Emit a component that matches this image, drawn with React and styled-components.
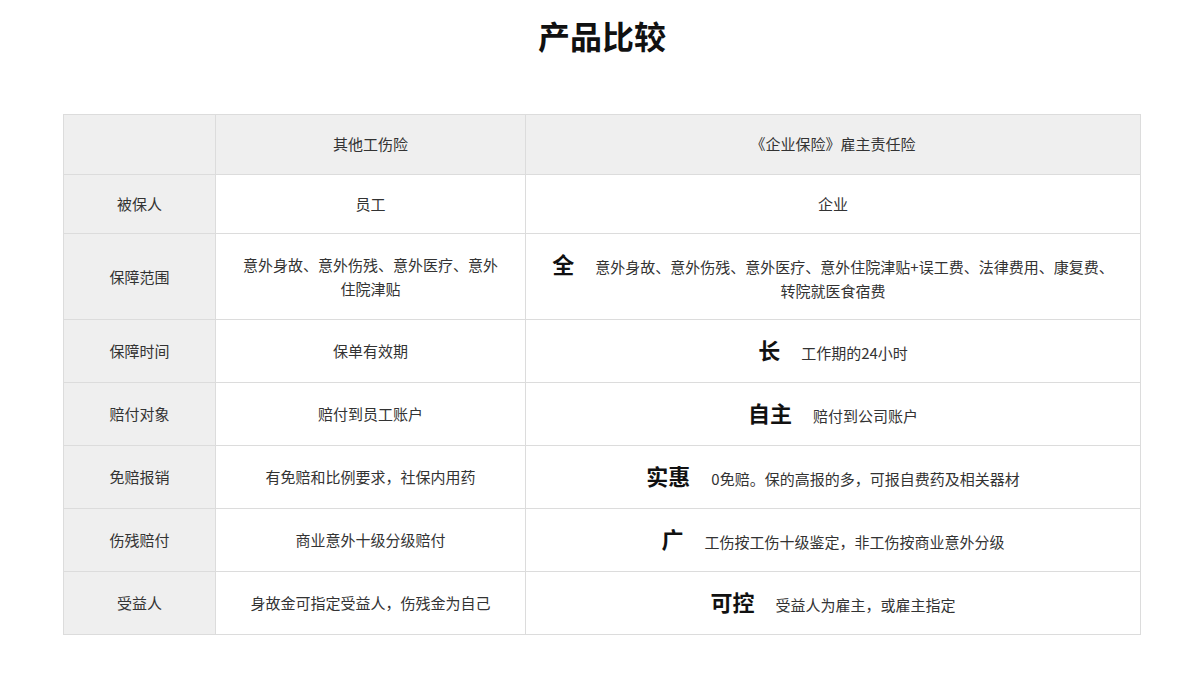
import React from 'react';
import styled, { createGlobalStyle } from 'styled-components';

const GlobalStyle = createGlobalStyle`
  body {
    margin: 0;
    background: #fff;
    font-family: 'Microsoft YaHei', 'Noto Sans CJK SC', 'Noto Sans', sans-serif;
    color: #333;
    text-spacing-trim: space-all;
    font-feature-settings: "halt" 0, "chws" 0;
  }
`;

const Page = styled.div`
  padding: 15px 59px 40px 63px;
`;

const Title = styled.h2`
  margin: 0;
  text-align: center;
  font-size: 32px;
  line-height: 40px;
  font-weight: 700;
  color: #111;
`;

const Table = styled.table`
  margin-top: 59px;
  width: 100%;
  border-collapse: collapse;
  table-layout: fixed;
  font-size: 15px;
`;

const Cell = styled.td`
  border: 1px solid #dcdcdc;
  padding: ${(p) => (p.$tall ? '17px 25px 16px' : '17px 25px')};
  line-height: 24px;
  text-align: center;
  vertical-align: middle;
  font-weight: 400;
  background: ${(p) => (p.$shade ? '#efefef' : '#fff')};
  color: #333;
`;

const HeadCell = styled(Cell).attrs({ as: 'th' })`
  padding: 17px 25px 18px;
`;

const Key = styled.strong`
  font-size: 22px;
  line-height: 25px;
  font-weight: 700;
  color: #111;
  margin-right: 21px;
`;

const rows = [
  { label: '被保人', other: '员工', key: '', ours: '企业' },
  {
    label: '保障范围',
    other: '意外身故、意外伤残、意外医疗、意外住院津贴',
    key: '全',
    ours: '意外身故、意外伤残、意外医疗、意外住院津贴+误工费、法律费用、康复费、转院就医食宿费',
    tall: true,
  },
  { label: '保障时间', other: '保单有效期', key: '长', ours: '工作期的24小时' },
  { label: '赔付对象', other: '赔付到员工账户', key: '自主', ours: '赔付到公司账户' },
  { label: '免赔报销', other: '有免赔和比例要求，社保内用药', key: '实惠', ours: '0免赔。保的高报的多，可报自费药及相关器材' },
  { label: '伤残赔付', other: '商业意外十级分级赔付', key: '广', ours: '工伤按工伤十级鉴定，非工伤按商业意外分级' },
  { label: '受益人', other: '身故金可指定受益人，伤残金为自己', key: '可控', ours: '受益人为雇主，或雇主指定' },
];

export default function App() {
  return (
    <Page>
      <GlobalStyle />
      <Title>产品比较</Title>
      <Table>
        <colgroup>
          <col style={{ width: 152 }} />
          <col style={{ width: 310 }} />
          <col />
        </colgroup>
        <thead>
          <tr>
            <HeadCell $shade />
            <HeadCell $shade>其他工伤险</HeadCell>
            <HeadCell $shade>《企业保险》雇主责任险</HeadCell>
          </tr>
        </thead>
        <tbody>
          {rows.map((r) => (
            <tr key={r.label}>
              <Cell $shade $tall={r.tall}>{r.label}</Cell>
              <Cell $tall={r.tall}>{r.other}</Cell>
              <Cell $tall={r.tall}>
                {r.key && <Key>{r.key}</Key>}
                {r.ours}
              </Cell>
            </tr>
          ))}
        </tbody>
      </Table>
    </Page>
  );
}
